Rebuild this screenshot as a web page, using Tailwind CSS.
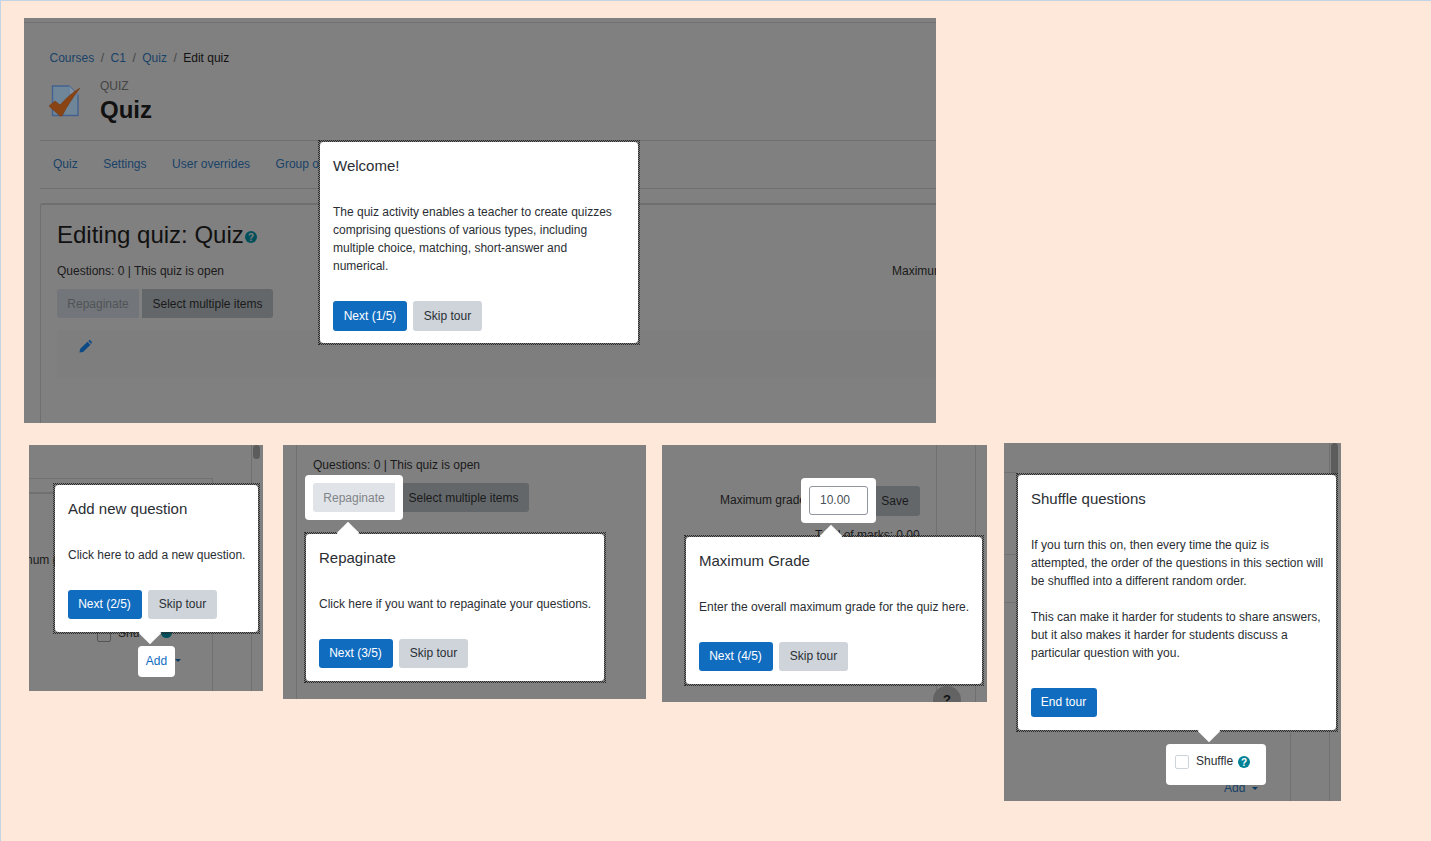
<!DOCTYPE html>
<html lang="en">
<head>
  <meta charset="UTF-8" />
  <title>Quiz tour</title>
  <script src="https://cdn.jsdelivr.net/npm/@tailwindcss/browser@4"></script>
</head>
<body class="relative h-[841px] w-[1431px] overflow-hidden bg-[#fde8d9] font-['Liberation_Sans',Arial,sans-serif] text-[12px] text-[#2a2e33] border-t border-l border-[#c3d4e6]">

  <!-- Screenshot 1: welcome -->
  <section class="absolute left-[23px] top-[17px] h-[405px] w-[912px] overflow-hidden bg-[#808080]">
    <div class="mt-[4px] h-px w-full bg-[#727272]"></div>
    <div class="pl-[16px] pt-[28px]">
      <nav class="flex gap-[6.5px] pl-[9.5px] leading-[14px] text-[#194268]">
        <span>Courses</span><span class="text-[#444]">/</span><span>C1</span><span class="text-[#444]">/</span><span>Quiz</span><span class="text-[#444]">/</span><span class="text-[#111]">Edit quiz</span>
      </nav>
      <div class="mt-[14px] flex items-start pl-[9px]">
        <svg class="mt-[6px] h-[32px] w-[32px]" viewBox="0 0 32 32">
          <path d="M3.5 1H20L29 10V30.5H3.5Z" fill="#6f8598" stroke="#44628f" stroke-width="1.4"/>
          <path d="M20 1V10H29" fill="#7f90a0" stroke="#5f7d9f"/>
          <path d="M0 21L6 16L11 20C17 13 24 7 31 3C25 11 18 21 13 31H11Z" fill="#8a4313" stroke="#6d3610" stroke-width=".5"/>
        </svg>
        <div class="ml-[19px]">
          <div class="leading-[14px] text-[#444]">QUIZ</div>
          <div class="mt-[2px] text-[24px] font-bold leading-[30px] text-[#111]">Quiz</div>
        </div>
      </div>
      <div class="mt-[15px] h-px bg-[#6f6f6f]"></div>
      <div class="flex h-[47px] items-center gap-[25.5px] pb-[2px] pl-[13px] text-[#194268]">
        <span>Quiz</span><span>Settings</span><span>User overrides</span><span>Group o</span>
      </div>
      <div class="h-px bg-[#6f6f6f]"></div>
      <div class="mt-[14px] h-[300px] rounded-tl-[3px] border-l border-t-2 border-[#6f6f6f] pl-[16px] pt-[13px]">
        <div class="flex items-center">
          <h2 class="text-[24px] leading-[34px] text-[#111]">Editing quiz: Quiz</h2>
          <svg class="ml-[1px] mt-[3px] h-[12px] w-[12px]" viewBox="0 0 12 12"><circle cx="6" cy="6" r="6" fill="#00505c"/><text x="6" y="9.5" text-anchor="middle" font-size="10" font-weight="700" fill="#808080">?</text></svg>
        </div>
        <div class="mt-[10px] flex justify-between leading-[18px] text-[#1a1a1a]">
          <span>Questions: 0 | This quiz is open</span>
          <span class="mr-[-26px] w-[70px] overflow-hidden whitespace-nowrap">Maximum grade</span>
        </div>
        <div class="mt-[9px] flex gap-[3px]">
          <button class="h-[29px] w-[82px] rounded-l-[3px] bg-[#72767a] text-[#505457]">Repaginate</button>
          <button class="h-[29px] w-[131px] rounded-r-[3px] bg-[#63676a] text-[#1a1a1a]">Select multiple items</button>
        </div>
        <div class="mt-[12px] h-[48px] bg-[#7e7e7e] pl-[22px] pt-[10px]">
          <svg class="h-[13px] w-[13px]" viewBox="0 0 13 13"><path d="M0.5 12.5L1 9L8.5 1.8L11.5 4.8L4 12Z M9.3 1L10.2.3C10.6 0 11 0 11.3.3L12.7 1.7C13 2 13 2.4 12.7 2.8L12.2 3.9Z" fill="#0c4a85"/></svg>
        </div>
      </div>
    </div>

    <div class="absolute left-[295px] top-[123px] w-[320px] border border-dotted border-[#2a2a2a] outline outline-dotted outline-[#2a2a2a]">
      <div class="h-[201px] rounded-[4px] bg-white px-[13px] pt-[15px]">
        <h3 class="text-[15px] leading-[18px]">Welcome!</h3>
        <p class="mt-[28px] w-[285px] leading-[18px]">The quiz activity enables a teacher to create quizzes comprising questions of various types, including multiple choice, matching, short-answer and numerical.</p>
        <div class="mt-[26px] flex gap-[6px]">
          <button class="h-[30px] w-[74px] rounded-[3px] bg-[#0f6cbf] text-white">Next (1/5)</button>
          <button class="h-[30px] w-[69px] rounded-[3px] bg-[#ced4da]">Skip tour</button>
        </div>
      </div>
    </div>
  </section>

  <!-- Screenshot 2: add new question -->
  <section class="absolute left-[28px] top-[444px] h-[246px] w-[234px] overflow-hidden bg-[#808080]">
    <div class="absolute left-0 top-[33px] h-px w-[184px] bg-[#727272]"></div>
    <div class="absolute left-0 top-[47px] h-[2px] w-[25px] bg-[#707070]"></div>
    <div class="absolute left-[183px] top-[33px] h-[213px] w-px bg-[#707070]"></div>
    <div class="absolute left-[222px] top-0 h-[246px] w-px bg-[#707070]"></div>
    <div class="absolute left-[224px] top-0 h-[14px] w-[7px] rounded-[4px] bg-[#5c5c5c]"></div>
    <span class="absolute left-[-3px] top-[108px] leading-[14px] text-[#1a1a1a]">num g</span>
    <span class="absolute left-[89px] top-[181px] leading-[14px] text-[#1a1a1a]">Shu</span>
    <span class="absolute left-[68px] top-[183px] h-[14px] w-[14px] rounded-[2px] border border-[#555]"></span>
    <span class="absolute left-[132px] top-[182px] h-[11px] w-[11px] rounded-full bg-[#00505c]"></span>
    <span class="absolute left-[109px] top-[201px] h-[31px] w-[37px] rounded-[4px] bg-white text-center leading-[31px] text-[#0f6cbf]">Add</span>
    <span class="absolute left-[146px] top-[214px] border-x-[3px] border-t-[3px] border-x-transparent border-t-[#0c3a63]"></span>
    <div class="absolute left-[25px] top-[39px] w-[205px] border border-dotted border-[#2a2a2a] outline outline-dotted outline-[#2a2a2a]">
      <div class="h-[147px] rounded-[4px] bg-white px-[13px] pt-[15px]">
        <h3 class="text-[15px] leading-[18px]">Add new question</h3>
        <p class="mt-[28px] whitespace-nowrap leading-[18px]">Click here to add a new question.</p>
        <div class="mt-[26px] flex gap-[6px]">
          <button class="h-[29px] w-[74px] rounded-[3px] bg-[#0f6cbf] pb-[2px] pr-[1px] text-white">Next (2/5)</button>
          <button class="h-[29px] w-[69px] rounded-[3px] bg-[#ced4da] pb-[2px]">Skip tour</button>
        </div>
      </div>
    </div>
    <span class="absolute left-[113px] top-[180px] h-[16px] w-[16px] rotate-45 bg-white"></span>
  </section>

  <!-- Screenshot 3: repaginate -->
  <section class="absolute left-[282px] top-[444px] h-[254px] w-[363px] overflow-hidden bg-[#808080]">
    <div class="absolute left-[13px] top-0 h-[254px] w-px bg-[#707070]"></div>
    <span class="absolute left-[30px] top-[11px] leading-[18px] text-[#1a1a1a]">Questions: 0 | This quiz is open</span>
    <button class="absolute left-[115px] top-[38px] h-[29px] w-[131px] rounded-r-[3px] bg-[#63676a] text-[#1a1a1a]">Select multiple items</button>
    <span class="absolute left-[22px] top-[30px] h-[45px] w-[98px] rounded-[4px] bg-white"></span>
    <button class="absolute left-[30px] top-[38px] h-[29px] w-[82px] rounded-l-[3px] bg-[#e0e3e7] text-[#808589]">Repaginate</button>
    <div class="absolute left-[22px] top-[88px] w-[300px] border border-dotted border-[#2a2a2a] outline outline-dotted outline-[#2a2a2a]">
      <div class="h-[147px] rounded-[4px] bg-white px-[13px] pt-[15px]">
        <h3 class="text-[15px] leading-[18px]">Repaginate</h3>
        <p class="mt-[28px] whitespace-nowrap leading-[18px]">Click here if you want to repaginate your questions.</p>
        <div class="mt-[26px] flex gap-[6px]">
          <button class="h-[29px] w-[74px] rounded-[3px] bg-[#0f6cbf] pb-[2px] pr-[1px] text-white">Next (3/5)</button>
          <button class="h-[29px] w-[69px] rounded-[3px] bg-[#ced4da] pb-[2px]">Skip tour</button>
        </div>
      </div>
    </div>
    <span class="absolute left-[57px] top-[80px] h-[16px] w-[16px] rotate-45 bg-white"></span>
  </section>

  <!-- Screenshot 4: maximum grade -->
  <section class="absolute left-[661px] top-[444px] h-[257px] w-[325px] overflow-hidden bg-[#808080]">
    <div class="absolute left-[274px] top-0 h-[257px] w-px bg-[#707070]"></div>
    <div class="absolute left-[313px] top-0 h-[257px] w-px bg-[#707070]"></div>
    <span class="absolute left-[58px] top-[48px] leading-[14px] text-[#1a1a1a]">Maximum grade</span>
    <button class="absolute left-[200px] top-[41px] h-[30px] w-[58px] rounded-[3px] bg-[#63676a] pl-[8px] text-[#1a1a1a]">Save</button>
    <span class="absolute left-[153px] top-[83px] leading-[14px] text-[#1a1a1a]">Total of marks: 0.00</span>
    <div class="absolute left-[139px] top-[33px] h-[45px] w-[75px] rounded-[4px] bg-white p-[8px]">
      <div class="h-[29px] rounded-[3px] border border-[#8f959e] pl-[10px] leading-[27px] text-[#495057]">10.00</div>
    </div>
    <span class="absolute left-[271px] top-[241px] h-[28px] w-[28px] rounded-full bg-[#636363] text-center text-[13px] font-bold leading-[28px] text-[#111]">?</span>
    <div class="absolute left-[23px] top-[91px] w-[298px] border border-dotted border-[#2a2a2a] outline outline-dotted outline-[#2a2a2a]">
      <div class="h-[147px] rounded-[4px] bg-white px-[13px] pt-[15px]">
        <h3 class="text-[15px] leading-[18px]">Maximum Grade</h3>
        <p class="mt-[28px] whitespace-nowrap leading-[18px]">Enter the overall maximum grade for the quiz here.</p>
        <div class="mt-[26px] flex gap-[6px]">
          <button class="h-[29px] w-[74px] rounded-[3px] bg-[#0f6cbf] pb-[2px] pr-[1px] text-white">Next (4/5)</button>
          <button class="h-[29px] w-[69px] rounded-[3px] bg-[#ced4da] pb-[2px]">Skip tour</button>
        </div>
      </div>
    </div>
    <span class="absolute left-[161px] top-[83px] h-[16px] w-[16px] rotate-45 bg-white"></span>
  </section>

  <!-- Screenshot 5: shuffle -->
  <section class="absolute left-[1003px] top-[442px] h-[358px] w-[337px] overflow-hidden bg-[#808080]">
    <div class="absolute left-0 top-[29px] h-px w-[12px] bg-[#727272]"></div>
    <div class="absolute left-0 top-[111px] h-px w-[12px] bg-[#727272]"></div>
    <div class="absolute left-0 top-[159px] h-px w-[12px] bg-[#727272]"></div>
    <div class="absolute left-[286px] top-[290px] h-[68px] w-px bg-[#707070]"></div>
    <div class="absolute left-[325px] top-0 h-[358px] w-px bg-[#707070]"></div>
    <div class="absolute left-[327px] top-0 h-[32px] w-[7px] rounded-[4px] bg-[#5c5c5c]"></div>
    <span class="absolute left-[220px] top-[338px] leading-[14px] text-[#194268]">Add</span>
    <span class="absolute left-[248px] top-[344px] border-x-[3px] border-t-[3px] border-x-transparent border-t-[#0c3a63]"></span>
    <div class="absolute left-[162px] top-[301px] flex h-[41px] w-[100px] items-start rounded-[4px] bg-white pl-[9px] pt-[10px]">
      <span class="mt-[1px] h-[14px] w-[14px] rounded-[2px] border border-[#ced4da]"></span>
      <span class="ml-[7px] leading-[14px]">Shuffle</span>
      <svg class="ml-[5px] mt-[2px] h-[12px] w-[12px]" viewBox="0 0 12 12"><circle cx="6" cy="6" r="6" fill="#008196"/><text x="6" y="9.5" text-anchor="middle" font-size="10" font-weight="700" fill="#fff">?</text></svg>
    </div>
    <div class="absolute left-[13px] top-[31px] w-[320px] border border-dotted border-[#2a2a2a] outline outline-dotted outline-[#2a2a2a]">
      <div class="h-[255px] rounded-[4px] bg-white pl-[13px] pr-[10px] pt-[15px]">
        <h3 class="text-[15px] leading-[18px]">Shuffle questions</h3>
        <p class="mt-[28px] leading-[18px]">If you turn this on, then every time the quiz is attempted, the order of the questions in this section will be shuffled into a different random order.</p>
        <p class="mt-[18px] leading-[18px]">This can make it harder for students to share answers, but it also makes it harder for students discuss a particular question with you.</p>
        <div class="mt-[26px]">
          <button class="h-[29px] w-[66px] rounded-[3px] bg-[#0f6cbf] pb-[2px] pr-[1px] text-white">End tour</button>
        </div>
      </div>
    </div>
    <span class="absolute left-[197px] top-[280px] h-[16px] w-[16px] rotate-45 bg-white"></span>
  </section>
</body>
</html>
